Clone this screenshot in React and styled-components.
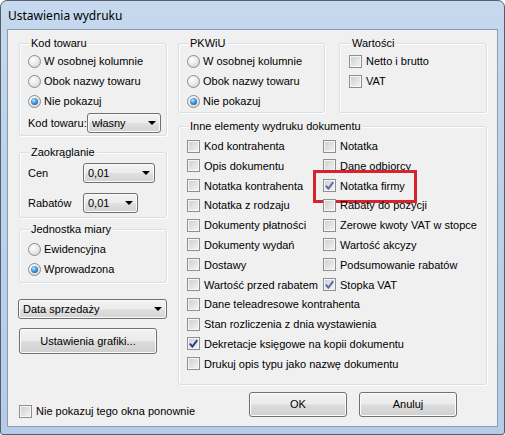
import React from "react";
import styled, { createGlobalStyle } from "styled-components";

const GlobalStyle = createGlobalStyle`
  html, body {
    margin: 0;
    padding: 0;
    background: #ffffff;
  }
  body {
    font-family: "Liberation Sans", Arial, sans-serif;
    font-size: 11px;
    color: #000;
  }
`;

const Window = styled.div`
  width: 505px;
  height: 435px;
  box-sizing: border-box;
  border: 1px solid #555f6a;
  border-radius: 7px 7px 3px 3px;
  background: linear-gradient(180deg, #c6d9ee 0%, #bcd3eb 35%, #b4cce7 100%);
  padding: 0 6px 7px;
  display: flex;
  flex-direction: column;
`;

const TitleBar = styled.div`
  height: 28px;
  display: flex;
  align-items: center;
  padding-left: 1px;
  font-family: "Noto Sans", "Liberation Sans", sans-serif;
  font-size: 12px;
  color: #000;
`;

const Client = styled.div`
  flex: 1;
  min-height: 0;
  box-sizing: border-box;
  border: 1px solid #8a9cb0;
  background: #f0f0f0;
  display: flex;
  gap: 11px;
  padding: 6px 10px 8px 11px;
`;

const LeftCol = styled.div`
  width: 148px;
  display: flex;
  flex-direction: column;
`;

const RightCol = styled.div`
  flex: 1;
  display: flex;
  flex-direction: column;
`;

const TopRow = styled.div`
  display: flex;
  gap: 14px;
`;

const Group = styled.fieldset`
  margin: ${(p) => p.$mt || 0}px 0 0;
  padding: ${(p) => p.$pad || "1px 8px 1px"};
  width: ${(p) => (p.$w ? `${p.$w}px` : "auto")};
  box-sizing: border-box;
  min-width: 0;
  border: 1px solid #d5dfe5;
  border-radius: 3px;
  box-shadow: inset 1px 1px 0 #ffffff, 1px 1px 0 #ffffff;
`;

const Legend = styled.legend`
  padding: 0 2px;
  margin-left: 1px;
  line-height: 14px;
  font-size: 11px;
  background: #f0f0f0;
`;

const Option = styled.label`
  display: flex;
  align-items: center;
  gap: ${(p) => p.$gap || 3}px;
  height: ${(p) => p.$h || 20}px;
  white-space: nowrap;
  position: relative;
`;

const RadioDot = styled.span`
  width: 13px;
  height: 13px;
  flex: none;
  box-sizing: border-box;
  border-radius: 50%;
  border: 1px solid #8a8b8c;
  background: radial-gradient(circle at 35% 30%, #ffffff 0%, #ececec 45%, #cdcdcd 100%);
  display: flex;
  align-items: center;
  justify-content: center;

  &::after {
    content: "";
    display: ${(p) => (p.$on ? "block" : "none")};
    width: 7px;
    height: 7px;
    border-radius: 50%;
    background: radial-gradient(circle at 40% 35%, #c4e8ff 0%, #4a9ce0 40%, #15488a 100%);
  }
`;

const Box = styled.span`
  width: 13px;
  height: 13px;
  flex: none;
  box-sizing: border-box;
  border: 1px solid #8e8f8f;
  background: linear-gradient(135deg, #cdcdcd 0%, #e3e3e3 55%, #f5f5f5 100%);
  box-shadow: inset 0 0 0 1px #f6f6f6;
  display: flex;
  align-items: center;
  justify-content: center;
`;

const Check = styled.svg`
  width: 9px;
  height: 9px;
  display: block;
`;

const FieldRow = styled.div`
  display: flex;
  align-items: center;
  margin-top: ${(p) => p.$mt || 0}px;
  white-space: nowrap;
`;

const FieldLabel = styled.span`
  width: ${(p) => p.$w}px;
  flex: none;
`;

const Combo = styled.div`
  width: ${(p) => p.$w}px;
  height: 20px;
  box-sizing: border-box;
  margin: ${(p) => p.$m || 0};
  border: 1px solid #707070;
  border-radius: 3px;
  background: linear-gradient(180deg, #f3f3f3 0%, #ececec 48%, #e0e0e0 52%, #d4d4d4 100%);
  box-shadow: inset 0 0 0 1px #fbfbfb;
  display: flex;
  align-items: center;
  justify-content: space-between;
  padding: 0 4px 0 4px;
  flex: none;
`;

const Arrow = styled.span`
  width: 0;
  height: 0;
  border-left: 4px solid transparent;
  border-right: 4px solid transparent;
  border-top: 4px solid #000;
`;

const Button = styled.button`
  width: ${(p) => p.$w}px;
  height: ${(p) => p.$h}px;
  margin-top: ${(p) => p.$mt || 0}px;
  box-sizing: border-box;
  border: 1px solid #707070;
  border-radius: 3px;
  background: linear-gradient(180deg, #f2f2f2 0%, #ebebeb 48%, #dddddd 52%, #cfcfcf 100%);
  box-shadow: inset 0 0 0 1px #fcfcfc;
  font-family: "Liberation Sans", Arial, sans-serif;
  font-size: 11px;
  color: #000;
  padding: 0;
  flex: none;
`;

const OptionsGrid = styled.div`
  display: grid;
  grid-template-columns: 136px 1fr;
  grid-auto-rows: 19.8px;
`;

const Wide = styled.div`
  grid-column: 1 / span 2;
`;

const Highlight = styled.span`
  position: absolute;
  left: -10px;
  top: -6px;
  width: 104px;
  height: 33px;
  box-sizing: border-box;
  border: 3px solid #d7232d;
  pointer-events: none;
`;

const BottomCheck = styled.div`
  margin-top: auto;
  white-space: nowrap;
`;

const ButtonRow = styled.div`
  display: flex;
  gap: 12px;
  margin-top: 7px;
  padding-left: 71px;
`;

const Radio = ({ on, children }) => (
  <Option>
    <RadioDot $on={on} />
    {children}
  </Option>
);

const CheckBox = ({ on, light, children, highlight, h }) => (
  <Option $gap={4} $h={h}>
    <Box>
      {on && (
        <Check viewBox="0 0 9 9">
          <path
            d="M0.8 4.6 L3.4 7.6 L8.3 1.2"
            fill="none"
            stroke={light ? "#5669a8" : "#203c8e"}
            strokeWidth="1.9"
          />
        </Check>
      )}
    </Box>
    {children}
    {highlight && <Highlight />}
  </Option>
);

const left = [
  ["Kod kontrahenta"],
  ["Opis dokumentu"],
  ["Notatka kontrahenta"],
  ["Notatka z rodzaju"],
  ["Dokumenty płatności"],
  ["Dokumenty wydań"],
  ["Dostawy"],
  ["Wartość przed rabatem"],
];

const right = [
  ["Notatka"],
  ["Dane odbiorcy"],
  ["Notatka firmy", true, true],
  ["Rabaty do pozycji"],
  ["Zerowe kwoty VAT w stopce"],
  ["Wartość akcyzy"],
  ["Podsumowanie rabatów"],
  ["Stopka VAT", true],
];

const wide = [
  ["Dane teleadresowe kontrahenta"],
  ["Stan rozliczenia z dnia wystawienia"],
  ["Dekretacje księgowe na kopii dokumentu", true],
  ["Drukuj opis typu jako nazwę dokumentu"],
];

export default function App() {
  return (
    <>
      <GlobalStyle />
      <Window>
        <TitleBar>Ustawienia wydruku</TitleBar>
        <Client>
          <LeftCol>
            <Group $pad="1px 8px 2px">
              <Legend>Kod towaru</Legend>
              <Radio>W osobnej kolumnie</Radio>
              <Radio>Obok nazwy towaru</Radio>
              <Radio on>Nie pokazuj</Radio>
              <FieldRow $mt={2}>
                <FieldLabel $w={59}>Kod towaru:</FieldLabel>
                <Combo $w={74}>
                  własny
                  <Arrow />
                </Combo>
              </FieldRow>
            </Group>

            <Group $mt={9} $pad="4px 8px 4px">
              <Legend>Zaokrąglanie</Legend>
              <FieldRow>
                <FieldLabel $w={55}>Cen</FieldLabel>
                <Combo $w={72}>
                  0,01
                  <Arrow />
                </Combo>
              </FieldRow>
              <FieldRow $mt={10}>
                <FieldLabel $w={55}>Rabatów</FieldLabel>
                <Combo $w={55}>
                  0,01
                  <Arrow />
                </Combo>
              </FieldRow>
            </Group>

            <Group $mt={4} $pad="3px 8px 3px">
              <Legend>Jednostka miary</Legend>
              <Radio>Ewidencyjna</Radio>
              <Radio on>Wprowadzona</Radio>
            </Group>

            <Combo $w={149} $m="16px 0 0 -1px">
              Data sprzedaży
              <Arrow />
            </Combo>
            <Button $w={138} $h={26} $mt={9}>
              Ustawienia grafiki...
            </Button>

            <BottomCheck>
              <CheckBox h={14}>Nie pokazuj tego okna ponownie</CheckBox>
            </BottomCheck>
          </LeftCol>

          <RightCol>
            <TopRow>
              <Group $w={147}>
                <Legend>PKWiU</Legend>
                <Radio>W osobnej kolumnie</Radio>
                <Radio>Obok nazwy towaru</Radio>
                <Radio on>Nie pokazuj</Radio>
              </Group>
              <Group $w={148} $pad="1px 9px 1px">
                <Legend>Wartości</Legend>
                <CheckBox>Netto i brutto</CheckBox>
                <CheckBox>VAT</CheckBox>
              </Group>
            </TopRow>

            <Group $mt={6} $pad="3px 8px 10px">
              <Legend>Inne elementy wydruku dokumentu</Legend>
              <OptionsGrid>
                {left.map(([l, on], i) => {
                  const [r, ron, hl] = right[i];
                  return (
                    <React.Fragment key={l}>
                      <CheckBox on={on}>{l}</CheckBox>
                      <CheckBox on={ron} light highlight={hl}>
                        {r}
                      </CheckBox>
                    </React.Fragment>
                  );
                })}
                {wide.map(([t, on]) => (
                  <Wide key={t}>
                    <CheckBox on={on}>{t}</CheckBox>
                  </Wide>
                ))}
              </OptionsGrid>
            </Group>

            <ButtonRow>
              <Button $w={98} $h={25}>
                OK
              </Button>
              <Button $w={98} $h={25}>
                Anuluj
              </Button>
            </ButtonRow>
          </RightCol>
        </Client>
      </Window>
    </>
  );
}
